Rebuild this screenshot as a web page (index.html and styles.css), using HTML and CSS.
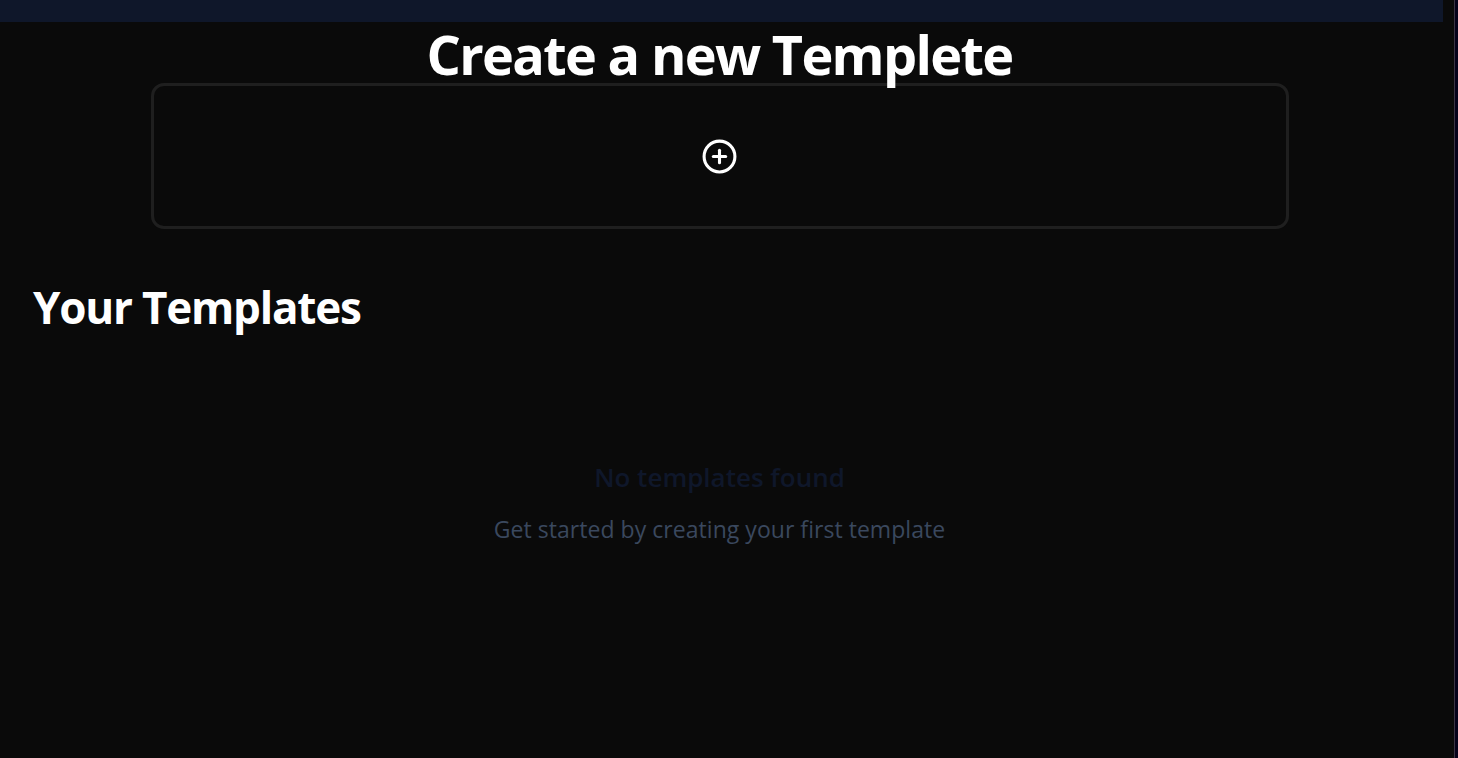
FILE: index.html
```html
<!DOCTYPE html>
<html lang="en">
<head>
<meta charset="utf-8">
<title>Templates</title>
<link rel="stylesheet" href="styles.css">
</head>
<body>
<div class="window">
  <main class="page">
    <div class="topbar"></div>
    <h1 class="title">Create a new Templete</h1>
    <div class="create-card">
      <svg class="plus" viewBox="0 0 24 24" fill="none" stroke="currentColor" stroke-width="2" stroke-linecap="round" stroke-linejoin="round" aria-hidden="true">
        <circle cx="12" cy="12" r="10"/>
        <path d="M8 12h8"/>
        <path d="M12 8v8"/>
      </svg>
    </div>
    <h2 class="section">Your Templates</h2>
    <div class="empty">
      <h3 class="empty-title">No templates found</h3>
      <p class="empty-text">Get started by creating your first template</p>
    </div>
  </main>
  <div class="edge"></div>
</div>
</body>
</html>
```

FILE: styles.css
```css
* { box-sizing: border-box; }
html, body { margin: 0; height: 100%; overflow: hidden; }
body { background: #05021a; font-family: "Open Sans", "Noto Sans", sans-serif; }
.window { display: flex; height: 758px; }
.page { width: 1454px; background: #0a0a0a; flex: none; }
.edge { width: 1px; background: #3a3444; flex: none; }
.topbar { width: 1443px; height: 22px; background: #0f172a; }
.title { width: 1439px; margin: 0; height: 61px; line-height: 64px; text-align: center; color: #fff; font-size: 54px; letter-spacing: -1.68px; font-weight: 700; white-space: nowrap; }
.create-card { width: 1138px; height: 146px; margin-left: 151px; border: 3px solid #1f1f1f; border-radius: 13px; display: flex; align-items: center; justify-content: center; }
.plus { width: 37px; height: 37px; color: #fff; margin-right: 1px; }
.section { margin: 50px 0 0 33px; color: #fff; font-size: 44px; letter-spacing: -1.2px; line-height: 56px; font-weight: 700; }
.empty { width: 1439px; margin-top: 126px; text-align: center; }
.empty-title { margin: 0; color: #0f172a; font-size: 26px; line-height: 32px; font-weight: 600; }
.empty-text { margin: 20px 0 0; color: #3a485e; font-size: 23px; letter-spacing: 0.04px; line-height: 32px; }
```
